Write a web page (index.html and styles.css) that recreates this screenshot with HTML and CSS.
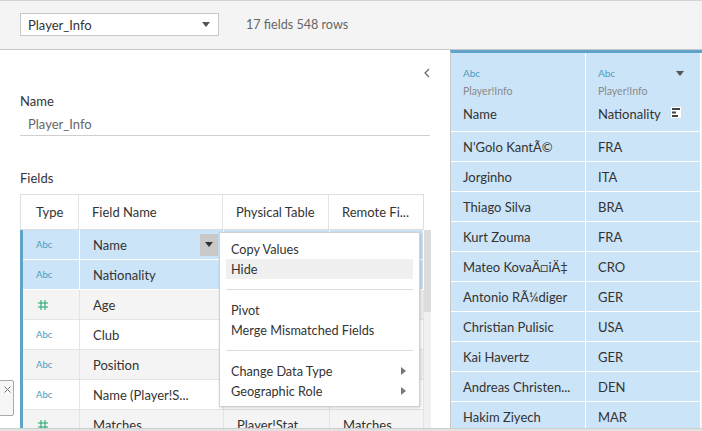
FILE: index.html
```html
<!DOCTYPE html>
<html>
<head>
<meta charset="utf-8">
<link rel="stylesheet" href="styles.css">
</head>
<body>
<div class="page">
  <div class="topbar">
    <div class="select">
      <span>Player_Info</span>
      <svg class="caret" width="8" height="5" viewBox="0 0 8 5"><path d="M0 0H8L4 5Z" fill="#555"/></svg>
    </div>
    <div class="meta">17 fields 548 rows</div>
  </div>
  <div class="main">
    <div class="panel">
      <div class="collapse-row">
        <svg width="6" height="10" viewBox="0 0 6 10"><path d="M5 1L1 5L5 9" fill="none" stroke="#666" stroke-width="1.2"/></svg>
      </div>
      <div class="label">Name</div>
      <div class="input">Player_Info</div>
      <div class="label fields-label">Fields</div>
      <div class="table">
        <div class="row head">
          <div class="cell">Type</div>
          <div class="cell">Field Name</div>
          <div class="cell">Physical Table</div>
          <div class="cell">Remote Fi...</div>
        </div>
        <div class="body">
          <div class="rows">
            <div class="row sel">
              <div class="cell"><span class="abc">Abc</span></div>
              <div class="cell namecell">Name<span class="ddbtn"><svg width="8" height="5" viewBox="0 0 8 5"><path d="M0 0H8L4 5Z" fill="#333"/></svg></span></div>
              <div class="cell"></div>
              <div class="cell"></div>
            </div>
            <div class="row sel">
              <div class="cell"><span class="abc">Abc</span></div>
              <div class="cell">Nationality</div>
              <div class="cell"></div>
              <div class="cell"></div>
            </div>
            <div class="row alt">
              <div class="cell"><svg class="num" width="10" height="10" viewBox="0 0 10 10"><path d="M3 0V10M7 0V10M0 3H10M0 7H10" stroke="#1aa36b" stroke-width="1"/></svg></div>
              <div class="cell">Age</div>
              <div class="cell"></div>
              <div class="cell"></div>
            </div>
            <div class="row">
              <div class="cell"><span class="abc">Abc</span></div>
              <div class="cell">Club</div>
              <div class="cell"></div>
              <div class="cell"></div>
            </div>
            <div class="row alt">
              <div class="cell"><span class="abc">Abc</span></div>
              <div class="cell">Position</div>
              <div class="cell"></div>
              <div class="cell"></div>
            </div>
            <div class="row">
              <div class="cell"><span class="abc">Abc</span></div>
              <div class="cell">Name (Player!S...</div>
              <div class="cell"></div>
              <div class="cell"></div>
            </div>
            <div class="row alt">
              <div class="cell"><svg class="num" width="10" height="10" viewBox="0 0 10 10"><path d="M3 0V10M7 0V10M0 3H10M0 7H10" stroke="#1aa36b" stroke-width="1"/></svg></div>
              <div class="cell">Matches</div>
              <div class="cell">Player!Stat</div>
              <div class="cell">Matches</div>
            </div>
          </div>
          <div class="vscroll"><div class="thumb"></div></div>
        </div>
        <div class="menu">
          <div class="item">Copy Values</div>
          <div class="item hover">Hide</div>
          <div class="sep"></div>
          <div class="item">Pivot</div>
          <div class="item">Merge Mismatched Fields</div>
          <div class="sep"></div>
          <div class="item sub">Change Data Type<svg width="5" height="8" viewBox="0 0 5 8"><path d="M0 0L5 4L0 8Z" fill="#777"/></svg></div>
          <div class="item sub">Geographic Role<svg width="5" height="8" viewBox="0 0 5 8"><path d="M0 0L5 4L0 8Z" fill="#777"/></svg></div>
        </div>
      </div>
      <div class="closetab"><svg width="7" height="7" viewBox="0 0 7 7"><path d="M0.5 0.5L6.5 6.5M6.5 0.5L0.5 6.5" stroke="#777" stroke-width="1"/></svg></div>
    </div>
    <div class="grid">
      <div class="gcols">
        <div class="gcol c1">
          <div class="ghead">
            <div class="gtype">Abc</div>
            <div class="gsrc">Player!Info</div>
            <div class="gname">Name</div>
          </div>
          <div class="gcell">N'Golo Kant&Atilde;&copy;</div>
          <div class="gcell">Jorginho</div>
          <div class="gcell">Thiago Silva</div>
          <div class="gcell">Kurt Zouma</div>
          <div class="gcell">Mateo Kova&Auml;&#x25A1;i&Auml;&Dagger;</div>
          <div class="gcell">Antonio R&Atilde;&frac14;diger</div>
          <div class="gcell">Christian Pulisic</div>
          <div class="gcell">Kai Havertz</div>
          <div class="gcell">Andreas Christen...</div>
          <div class="gcell">Hakim Ziyech</div>
        </div>
        <div class="gcol c2">
          <div class="ghead">
            <div class="gtype">Abc<svg class="gcaret" width="8" height="5" viewBox="0 0 8 5"><path d="M0 0H8L4 5Z" fill="#555"/></svg></div>
            <div class="gsrc">Player!Info</div>
            <div class="gname">Nationality<svg class="sorticon" width="10" height="11" viewBox="0 0 10 11"><rect width="10" height="11" fill="#fff"/><rect x="1" y="1" width="8" height="2" fill="#444"/><rect x="1" y="4.5" width="4" height="2" fill="#444"/><rect x="1" y="8" width="6" height="2" fill="#444"/></svg></div>
          </div>
          <div class="gcell">FRA</div>
          <div class="gcell">ITA</div>
          <div class="gcell">BRA</div>
          <div class="gcell">FRA</div>
          <div class="gcell">CRO</div>
          <div class="gcell">GER</div>
          <div class="gcell">USA</div>
          <div class="gcell">GER</div>
          <div class="gcell">DEN</div>
          <div class="gcell">MAR</div>
        </div>
        <div class="gedge"></div>
      </div>
    </div>
  </div>
  <div class="hscroll"></div>
</div>
</body>
</html>
```

FILE: styles.css
```css
* { box-sizing: border-box; }
html, body { margin: 0; padding: 0; }
body {
  width: 702px;
  height: 431px;
  overflow: hidden;
  font-family: "Lato", "Liberation Sans", sans-serif;
  font-size: 13px;
  color: #333;
  background: #fff;
}
.page {
  width: 702px;
  height: 431px;
  display: flex;
  flex-direction: column;
  position: relative;
}
.topbar {
  height: 50px;
  flex: none;
  background: #f4f4f4;
  border-top: 1px solid #d4d4d4;
  border-bottom: 1px solid #c9c9c9;
  display: flex;
  align-items: flex-start;
  padding: 12px 0 0 20px;
}
.select {
  width: 199px;
  height: 23px;
  background: #fff;
  border: 1px solid #c8c8c8;
  display: flex;
  align-items: center;
  justify-content: space-between;
  padding: 0 8px 0 7px;
  font-size: 13px;
  color: #333;
}
.meta {
  margin-left: 27px;
  line-height: 23px;
  color: #666;
  font-size: 12.6px;
}
.main {
  flex: 1;
  display: flex;
  min-height: 0;
  overflow: hidden;
}
.panel {
  width: 450px;
  flex: none;
  padding-left: 20px;
  position: relative;
}
.collapse-row {
  height: 43px;
  display: flex;
  justify-content: flex-end;
  align-items: flex-start;
  padding: 18px 20px 0 0;
}
.label {
  line-height: 16px;
  font-size: 13px;
  color: #333;
}
.input {
  width: 410px;
  padding: 7px 0 3px 8px;
  line-height: 16px;
  color: #666;
  border-bottom: 1px solid #cfcfcf;
}
.fields-label {
  margin-top: 34px;
}
.table {
  margin-top: 8px;
  position: relative;
  width: 411px;
}
.row {
  width: 404px;
  display: grid;
  grid-template-columns: 1fr 144px 106px 94px;
  height: 30px;
  border-left: 3px solid #5fa3c9;
  background: #fff;
}
.row.head {
  height: 36px;
  border: 1px solid #dedede;
  border-bottom: 1px solid #dedede;
}
.row.head .cell {
  border-bottom: none;
}
.row.head .cell:last-child { border-right: none; }
.cell {
  display: flex;
  align-items: center;
  padding-left: 13px;
  border-right: 1px solid #e4e4e4;
  border-bottom: 1px solid #e4e4e4;
  white-space: nowrap;
  overflow: hidden;
}
.row .cell:first-child { padding-left: 13px; }
.row.head .cell:first-child { padding-left: 15px; }
.row.alt { background: #f4f4f4; }
.row.sel { background: #cce4f7; }
.row.sel .cell { border-color: #fff; }
.body {
  display: flex;
}
.rows { width: 404px; flex: none; }
.vscroll {
  width: 7px;
  background: #f1f1f1;
}
.thumb {
  height: 82px;
  background: #dcdcdc;
}
.abc {
  font-size: 9.5px;
  color: #4b9cc2;
}
.num {
  margin-left: 2px;
  margin-top: 1px;
}
.namecell {
  padding-right: 5px;
}
.ddbtn {
  margin-left: auto;
  width: 18px;
  height: 22px;
  background: #c9c9c9;
  display: flex;
  align-items: center;
  justify-content: center;
}
.menu {
  position: absolute;
  left: 199px;
  top: 38px;
  width: 201px;
  height: 175px;
  background: #fff;
  border: 1px solid #d0d0d0;
  box-shadow: 1px 1px 3px rgba(0,0,0,0.18);
  padding: 6px 6px 0 6px;
}
.item {
  height: 20px;
  line-height: 20px;
  padding-left: 5px;
  font-size: 12.7px;
  color: #333;
  display: flex;
  align-items: center;
  justify-content: space-between;
  padding-right: 7px;
}
.item.hover { background: #f0f0f0; }
.sep {
  height: 21px;
  display: flex;
  align-items: center;
}
.sep::before {
  content: "";
  display: block;
  width: 100%;
  height: 1px;
  background: #dcdcdc;
}
.closetab {
  position: absolute;
  left: -1px;
  top: 330px;
  width: 15px;
  height: 36px;
  border: 1px solid #a9a9a9;
  border-radius: 0 2px 2px 0;
  background: #f6f6f6;
  padding-left: 4px;
  padding-top: 5px;
}
.closetab svg { display: block; }
.grid {
  flex: 1;
  border-left: 1px solid #c9c9c9;
  border-top: 3px solid #5fa3c9;
  background: #cce4f7;
  overflow: hidden;
}
.gcols { display: flex; height: 100%; }
.gcol { flex: none; border-right: 1px solid #fff; }
.c1 { width: 135px; }
.c2 { width: 115px; }
.gedge { flex: 1; background: #e9f2f9; }
.ghead {
  height: 78px;
  padding: 14px 0 0 12px;
  position: relative;
}
.gtype {
  font-size: 10px;
  color: #4b9cc2;
  line-height: 13px;
  display: flex;
  align-items: center;
}
.gcaret { margin-left: auto; margin-right: 16px; }
.gsrc {
  font-size: 10.5px;
  color: #8a8a8a;
  line-height: 14px;
  margin-top: 4px;
}
.gname {
  font-size: 13px;
  color: #333;
  line-height: 16px;
  margin-top: 8px;
  display: flex;
  align-items: center;
}
.sorticon { margin-left: 10px; margin-top: -4px; }
.gcell {
  height: 30px;
  border-top: 1px solid #fff;
  padding-left: 12px;
  display: flex;
  align-items: center;
  font-size: 13px;
  color: #333;
  white-space: nowrap;
  overflow: hidden;
}
.hscroll {
  height: 3px;
  flex: none;
  background: #e2e2e2;
  border-top: 1px solid #cfcfcf;
}
```
